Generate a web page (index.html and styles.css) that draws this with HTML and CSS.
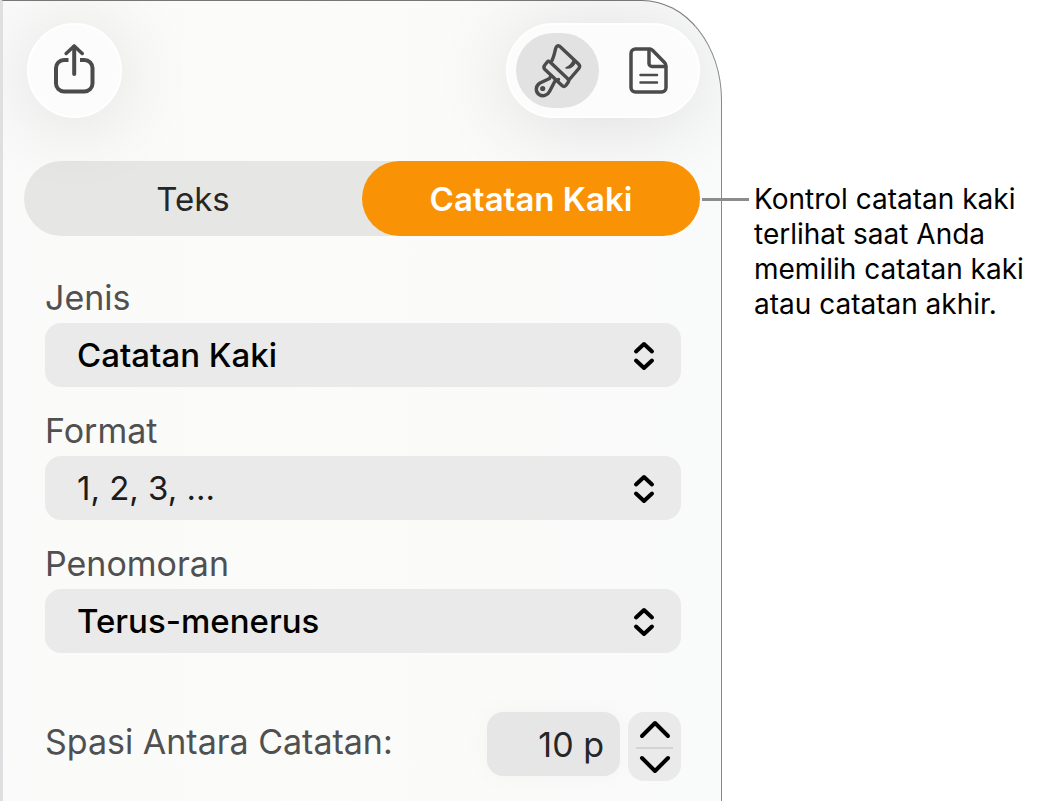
FILE: index.html
```html
<!DOCTYPE html>
<html lang="id">
<head>
<meta charset="UTF-8">
<meta name="viewport" content="width=device-width, initial-scale=1.0">
<title>Catatan Kaki</title>
<link rel="stylesheet" href="styles.css">
</head>
<body>

<div class="page">
    <main class="panel">
        <div class="toolbar">
            <button class="tool share-btn" type="button" aria-label="Bagikan">
                <svg width="42" height="54" viewBox="0 0 42 54" fill="none" stroke="#4b4b4b" stroke-width="4" stroke-linecap="round" stroke-linejoin="round">
                    <path d="M14.500 16H10a8 8 0 0 0-8 8v15.500a8 8 0 0 0 8 8h20.500a8 8 0 0 0 8-8V24a8 8 0 0 0-8-8H26" stroke-linecap="butt"/>
                    <path d="M20.200 30V2.500"/>
                    <path d="M12.200 9.500L20.200 2l8 7.500" stroke-width="3.500"/>
                </svg>
            </button>
            <div class="tool-group">
                <button class="tool active" type="button" aria-label="Format">
                    <svg width="50" height="56" viewBox="533 43 50 56" fill="none" stroke="#4b4b4b" stroke-width="3.400" stroke-linecap="round" stroke-linejoin="round">
                        <path d="M552 60.500c2-4 2.500-7.500 3.500-11.500.8-3.500 3-4 5-2L578.500 64c1.500 1.500 1.500 3 .3 4.500L569 80"/>
                        <path d="M549.500 61.500L567.500 78.500c1.500 1.500 1.500 3 .5 4l-2 2.800c-1.200 1.500-2.600 1.500-4 .2L545 69.500c-1.500-1.500-1.500-2.500-.5-4l2.500-3.200c.8-1.200 1.600-1.500 2.500-.8z"/>
                        <path d="M551 75.500l-1.500 3-9.500 4.500c-5 3-4.500 9-1 11.500 4 2.500 8.500 1 10.500-3l5.500-10.500 3.500-1.500"/>
                        <path d="M573.500 59.500c-1 4-3.500 6.500-7.500 8.500 4 .5 7.500-1.500 9.500-6z" fill="#4b4b4b" stroke-width="1.500"/>
                        <circle cx="542.700" cy="88.500" r="2.600" fill="#4b4b4b" stroke="none"/>
                    </svg>
                </button>
                <button class="tool" type="button" aria-label="Dokumen">
                    <svg width="40" height="50" viewBox="0 0 40 50" fill="none" stroke="#4b4b4b" stroke-width="3.500" stroke-linecap="round" stroke-linejoin="round">
                        <path d="M21 3H6.500A4.500 4.500 0 0 0 2 7.500v34A4.500 4.500 0 0 0 6.500 46h26a4.500 4.500 0 0 0 4.500-4.500V20c0-2-.5-2.500-1.500-3.500L23.500 4.200C22.500 3.300 22 3 21 3z"/>
                        <path d="M20 4v13.500a3 3 0 0 0 3 3h13.500"/>
                        <path d="M11.500 29H28M11.500 36.500H28" stroke-width="2.500"/>
                    </svg>
                </button>
            </div>
        </div>

        <div class="tabs" role="tablist">
            <button class="tab" type="button" role="tab" aria-selected="false">Teks</button>
            <button class="tab selected" type="button" role="tab" aria-selected="true">Catatan Kaki</button>
        </div>

        <form class="settings">
            <div class="field">
                <label for="type">Jenis</label>
                <div class="select-box">
                    <select id="type" class="strong">
                        <option>Catatan Kaki</option>
                    </select>
                    <svg class="arrows" width="22" height="30" viewBox="0 0 22 30"><path d="M3 10.500L11 3l8 7.500M3 19.500L11 27l8-7.500"/></svg>
                </div>
            </div>
            <div class="field">
                <label for="format">Format</label>
                <div class="select-box">
                    <select id="format">
                        <option>1, 2, 3, ...</option>
                    </select>
                    <svg class="arrows" width="22" height="30" viewBox="0 0 22 30"><path d="M3 10.500L11 3l8 7.500M3 19.500L11 27l8-7.500"/></svg>
                </div>
            </div>
            <div class="field">
                <label for="numbering">Penomoran</label>
                <div class="select-box">
                    <select id="numbering" class="strong">
                        <option>Terus-menerus</option>
                    </select>
                    <svg class="arrows" width="22" height="30" viewBox="0 0 22 30"><path d="M3 10.500L11 3l8 7.500M3 19.500L11 27l8-7.500"/></svg>
                </div>
            </div>
            <div class="spacing-row">
                <label for="spacing">Spasi Antara Catatan:</label>
                <input type="text" id="spacing" value="10 p">
                <div class="stepper">
                    <button type="button" aria-label="Tambah">
                        <svg width="32" height="20" viewBox="0 0 32 20"><path d="M3 17L16 4l13 13"/></svg>
                    </button>
                    <button type="button" aria-label="Kurangi">
                        <svg width="32" height="20" viewBox="0 0 32 20"><path d="M3 3l13 13L29 3"/></svg>
                    </button>
                </div>
            </div>
        </form>
    </main>

    <aside class="callout">
        <p>Kontrol catatan kaki terlihat saat Anda memilih catatan kaki atau catatan akhir.</p>
    </aside>
</div>

</body>
</html>
```

FILE: styles.css
```css
* {
    box-sizing: border-box;
}

body {
    margin: 0;
    background-color: #fff;
    color: #000;
    font-family: Inter, "Liberation Sans", sans-serif;
}

button, select, input {
    font: inherit;
    border: none;
    margin: 0;
    padding: 0;
}

.page {
    display: grid;
    grid-template-columns: minmax(0, 1fr) 321px;
    min-height: 100vh;
}

.panel {
    overflow: hidden;
    padding: 22px 21px 18px;
    border-top: 1px solid #777;
    border-right: 1px solid #888;
    border-left: 3px solid #dedfe0;
    border-top-right-radius: 80px 100px;
    background: linear-gradient(90deg, #fafafa, #fbfbf9 45%, #f9fafa);
}

/* Toolbar */
.toolbar {
    display: flex;
    justify-content: space-between;
    padding-left: 3px;
    margin-bottom: 43px;
}

.tool {
    display: flex;
    align-items: center;
    justify-content: center;
    width: 83px;
    height: 75px;
    border-radius: 38px;
    background: none;
}

.tool.active {
    background-color: #e2e2e2;
}

.share-btn, .tool-group {
    height: 95px;
    border: 2px solid #fff;
    border-radius: 48px;
    background-color: #fcfcfc;
    box-shadow: 0 6px 80px rgba(0, 0, 0, 0.12);
}

.share-btn {
    width: 95px;
}

.tool-group {
    display: flex;
    gap: 8px;
    padding: 8px;
}

/* Tabs */
.tabs {
    display: grid;
    grid-template-columns: 1fr 1fr;
    height: 75px;
    border-radius: 38px;
    background-color: #e6e6e5;
}

.tab {
    border-radius: 38px;
    background: none;
    color: #262626;
    font-size: 33px;
}

.tab.selected {
    background-color: #f99204;
    color: #fff;
    font-weight: 600;
}

/* Form */
.settings {
    display: flex;
    flex-direction: column;
    gap: 24px;
    padding: 42px 19px 0 21px;
}

label {
    color: #505050;
    font-size: 34px;
    line-height: 40px;
}

.field {
    display: grid;
    gap: 5px;
}

.select-box {
    position: relative;
}

select {
    display: block;
    width: 100%;
    height: 64px;
    padding: 0 70px 0 32px;
    border-radius: 16px;
    appearance: none;
    background-color: #e9eae9;
    color: #1c1c1c;
    font-size: 33px;
}

select.strong {
    color: #000;
    font-weight: 500;
}

.arrows {
    position: absolute;
    top: 18px;
    right: 26px;
    pointer-events: none;
}

.arrows path, .stepper path {
    fill: none;
    stroke: #000;
    stroke-width: 4px;
    stroke-linecap: round;
    stroke-linejoin: round;
}

.spacing-row {
    display: flex;
    align-items: flex-start;
    gap: 8px;
    margin-top: 35px;
}

.spacing-row label {
    flex: 1;
    line-height: 60px;
    white-space: nowrap;
}

.spacing-row input {
    width: 133px;
    height: 64px;
    padding-right: 16px;
    border-radius: 16px;
    background-color: #e6e6e6;
    box-shadow: 0 0 30px rgba(0, 0, 0, 0.03);
    color: #262626;
    font-size: 34px;
    text-align: right;
}

.stepper {
    width: 53px;
    height: 69px;
    padding: 0 8px;
    border-radius: 16px;
    background-color: #eaeaea;
}

.stepper button {
    display: flex;
    align-items: center;
    justify-content: center;
    width: 100%;
    height: 50%;
    background: none;
}

.stepper button + button {
    border-top: 2px solid #d4d4d4;
}

/* Callout */
.callout {
    position: relative;
    padding: 182px 16px 0 32px;
}

.callout::before {
    content: "";
    position: absolute;
    top: 198px;
    left: -20px;
    width: 47px;
    height: 3px;
    background-color: #8c8c8c;
}

.callout p {
    margin: 0;
    font-size: 28px;
    line-height: 35px;
}
```
